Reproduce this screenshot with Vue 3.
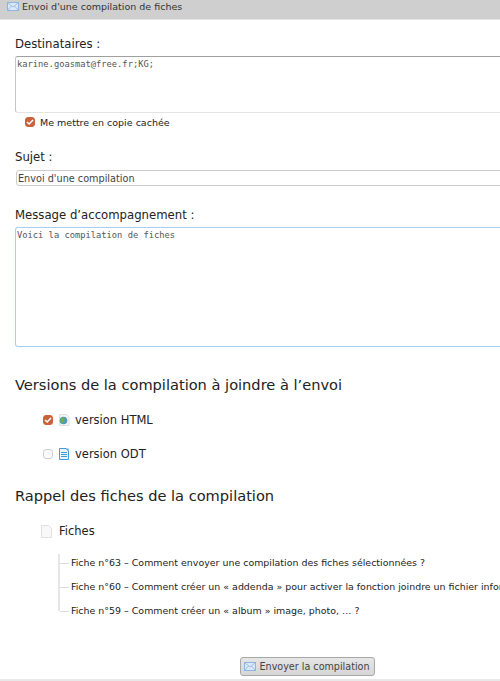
<template>
  <div class="page">
    <header class="title-bar">
      <svg class="mail" width="12" height="9" viewBox="0 0 12 9">
        <rect x="0.5" y="0.5" width="11" height="8" fill="#dbe8f8" stroke="#8fb4de" />
        <path d="M1 1 6 5l5-4M1 8l3.500-4M11 8 7.500 4" fill="none" stroke="#8fb4de" stroke-width="0.8" />
      </svg>
      <span>Envoi d'une compilation de fiches</span>
    </header>

    <form class="mail-form" @submit.prevent>
      <label class="field-label first">Destinataires :</label>
      <textarea class="box recipients" readonly spellcheck="false" :value="recipients"></textarea>
      <div class="copy-row">
        <span class="check on"><svg width="10" height="10" viewBox="0 0 10 10"><path d="M2 5 4.200 7 8 3" fill="none" stroke="#fff" stroke-width="1.600" /></svg></span>
        <span>Me mettre en copie cachée</span>
      </div>

      <label class="field-label subject-label">Sujet :</label>
      <input class="box subject" readonly value="Envoi d'une compilation" />

      <label class="field-label message-label">Message d’accompagnement :</label>
      <textarea class="box message" readonly spellcheck="false" :value="message"></textarea>

      <h2 class="versions-title">Versions de la compilation à joindre à l’envoi</h2>
      <div class="version html">
        <span class="check on"><svg width="10" height="10" viewBox="0 0 10 10"><path d="M2 5 4.200 7 8 3" fill="none" stroke="#fff" stroke-width="1.600" /></svg></span>
        <svg class="file-icon" width="12" height="12" viewBox="0 0 12 12">
          <path d="M1.500.5h7l2.500 2.500v8.500h-9.500z" fill="#f4f4f4" stroke="#dedede" />
          <circle cx="5.500" cy="6.500" r="3.800" fill="#4d9bb5" />
          <path d="M3 4.500c1.500-1 3-.8 3.500.5S5 7 5.500 8.500 3 8.500 2.500 7z" fill="#6fb04a" />
        </svg>
        <span>version HTML</span>
      </div>
      <div class="version odt">
        <span class="check"></span>
        <svg class="file-icon" width="12" height="12" viewBox="0 0 12 12">
          <path d="M1.500.5h6.500l2.500 2.500v8.500h-9z" fill="#eaf4fc" stroke="#3f9bdc" />
          <path d="M8 0.500h2.500v2.500z" fill="#3f9bdc" />
          <path d="M3 4.500h6M3 6.500h6M3 8.500h6" stroke="#3f9bdc" />
        </svg>
        <span>version ODT</span>
      </div>

      <h2 class="recap-title">Rappel des fiches de la compilation</h2>
      <div class="tree-root">
        <svg width="11" height="13" viewBox="0 0 11 13">
          <path d="M.5.500h7l3 3v9h-10z" fill="#f8f8f8" stroke="#e0e0e0" />
        </svg>
        <span>Fiches</span>
      </div>
      <ul class="tree">
        <li v-for="fiche in fiches" :key="fiche">{{ fiche }}</li>
      </ul>

      <div class="actions">
        <button type="button" class="send">
          <svg width="12" height="9" viewBox="0 0 12 9">
            <rect x="0.500" y="0.500" width="11" height="8" fill="#dbe8f8" stroke="#8fb4de" />
            <path d="M1 1 6 5l5-4M1 8l3.500-4M11 8 7.500 4" fill="none" stroke="#8fb4de" stroke-width="0.800" />
          </svg>
          Envoyer la compilation
        </button>
      </div>
    </form>
    <div class="bottom-line"></div>
  </div>
</template>

<script setup>
const recipients = 'karine.goasmat@free.fr;KG;'
const message = 'Voici la compilation de fiches'
const fiches = [
  'Fiche n°63 – Comment envoyer une compilation des fiches sélectionnées ?',
  'Fiche n°60 – Comment créer un « addenda » pour activer la fonction joindre un fichier informatique ?',
  'Fiche n°59 – Comment créer un « album » image, photo, …  ?'
]
</script>

<style>
html, body {
  margin: 0;
  background: #fff;
  overflow: hidden;
}
</style>

<style scoped>
.page {
  width: 500px;
  height: 681px;
  overflow: hidden;
  font-family: "DejaVu Sans", sans-serif;
  color: #222;
  position: relative;
}

.title-bar {
  height: 20px;
  box-sizing: border-box;
  background: #cfcfcf;
  border-bottom: 1px solid #e6e6e6;
  display: flex;
  align-items: center;
  gap: 3px;
  padding: 0 0 6px 7px;
  font-size: 9.500px;
  color: #333;
  white-space: nowrap;
}

.mail-form {
  padding-left: 15px;
}

.field-label {
  display: block;
  font-size: 11.700px;
  line-height: 14px;
}

.first {
  padding-top: 17px;
}

.box {
  display: block;
  box-sizing: border-box;
  width: 520px;
  border: 1px solid #e4e4e4;
  border-top-color: #a0a0a0;
  border-left-color: #c4c4c4;
  border-radius: 3px;
  background: #fff;
  color: #555;
  margin: 0;
  outline: none;
  resize: none;
  font-family: "DejaVu Sans Mono", monospace;
  font-size: 8.750px;
  padding: 2px 1px;
}

.recipients {
  height: 57px;
  margin-top: 5px;
}

.copy-row {
  display: flex;
  align-items: center;
  gap: 5px;
  font-size: 9.500px;
  margin: 2px 0 0 10px;
  height: 14px;
}

.check {
  width: 10px;
  height: 10px;
  box-sizing: border-box;
  border-radius: 3px;
  border: 1px solid #cfcfcf;
  background: #fafafa;
  display: inline-flex;
}

.check.on {
  background: #c9623a;
  border-color: #c9623a;
}

.check.on svg {
  margin: -1px;
}

.subject-label {
  margin-top: 21px;
}

.subject {
  height: 16px;
  margin: 6px 0 0 1px;
  font-family: "DejaVu Sans", sans-serif;
  font-size: 9.700px;
  padding: 0 1px;
  color: #444;
  border-color: #ccc;
}

.message-label {
  margin-top: 22px;
}

.message {
  height: 120px;
  margin-top: 5px;
  border: 1px solid #a9cdf0;
  box-shadow: 0 0 1px #c6def6;
  padding: 2px 1px;
}

.versions-title,
.recap-title {
  font-weight: 400;
  font-size: 14.600px;
  line-height: 18px;
  margin: 0;
  color: #222;
  white-space: nowrap;
}

.versions-title {
  margin-top: 29px;
}

.version {
  display: flex;
  align-items: center;
  font-size: 11.500px;
  height: 14px;
  padding-left: 28px;
  gap: 5px;
}

.version.html {
  margin-top: 19px;
}

.version.odt {
  margin-top: 20px;
}

.recap-title {
  margin-top: 26px;
}

.tree-root {
  display: flex;
  align-items: center;
  gap: 7px;
  font-size: 11.500px;
  height: 14px;
  margin: 19px 0 0 26px;
}

.tree {
  list-style: none;
  margin: 16px 0 0 43px;
  padding: 0;
  font-size: 9.450px;
  white-space: nowrap;
  border-left: 2px solid #e6e6e6;
  height: 57px;
}

.tree li {
  height: 24px;
  line-height: 16px;
  position: relative;
  padding-left: 11px;
  padding-top: 1px;
  box-sizing: border-box;
}

.tree li::before {
  content: "";
  position: absolute;
  left: 0;
  top: 9px;
  width: 9px;
  border-top: 1px solid #ddd;
}

.actions {
  display: flex;
  justify-content: center;
  margin-top: 46px;
  padding-left: 99px;
}

.send {
  display: flex;
  align-items: center;
  gap: 4px;
  height: 19px;
  width: 135px;
  padding: 0 3px;
  box-sizing: border-box;
  border: 1px solid #a8a8a8;
  border-radius: 3px;
  background: linear-gradient(#e6e6e6, #d6d6d6);
  font-family: "DejaVu Sans", sans-serif;
  font-size: 9.600px;
  color: #444;
  white-space: nowrap;
}

.bottom-line {
  position: absolute;
  left: 0;
  right: 0;
  bottom: 0;
  height: 2px;
  background: #e8e8e8;
}
</style>
